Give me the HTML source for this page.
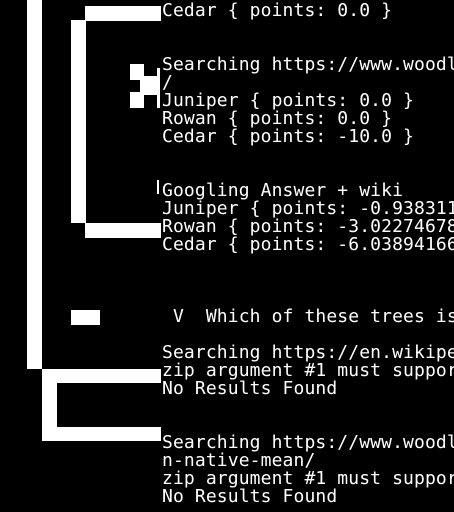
<!DOCTYPE html>
<html><head><style>
html,body{margin:0;padding:0;background:#000;width:454px;height:512px;overflow:hidden;position:relative}
pre{position:absolute;left:162px;top:2px;width:292px;height:510px;overflow:hidden;margin:0;font-family:"DejaVu Sans Mono","Liberation Mono",monospace;font-size:18px;line-height:18px;color:#fff;white-space:pre;letter-spacing:0.12px}
.b{position:absolute;background:#fff}
</style></head><body>
<div class="b" style="left:27px;top:0;width:15px;height:369px"></div>
<div class="b" style="left:85px;top:6px;width:76px;height:15px"></div>
<div class="b" style="left:71px;top:20px;width:15px;height:203px"></div>
<div class="b" style="left:85px;top:223px;width:76px;height:15px"></div>
<div class="b" style="left:130px;top:64px;width:14px;height:16px"></div>
<div class="b" style="left:130px;top:92px;width:14px;height:16px"></div>
<div class="b" style="left:140px;top:76px;width:18px;height:19px"></div>
<div class="b" style="left:157px;top:68px;width:3px;height:40px"></div>
<div class="b" style="left:157px;top:180px;width:2px;height:14px"></div>
<div class="b" style="left:71px;top:310px;width:29px;height:15px"></div>
<div class="b" style="left:42px;top:369px;width:119px;height:14px"></div>
<div class="b" style="left:42px;top:369px;width:15px;height:72px"></div>
<div class="b" style="left:42px;top:427px;width:119px;height:14px"></div>
<pre>Cedar { points: 0.0 }


Searching https://www.woodland
/
Juniper { points: 0.0 }
Rowan { points: 0.0 }
Cedar { points: -10.0 }


Googling Answer + wiki
Juniper { points: -0.938311
Rowan { points: -3.02274678
Cedar { points: -6.03894166



 V  Which of these trees is

Searching https://en.wikipedia
zip argument #1 must support
No Results Found


Searching https://www.woodland
n-native-mean/
zip argument #1 must support
No Results Found</pre>
</body></html>
